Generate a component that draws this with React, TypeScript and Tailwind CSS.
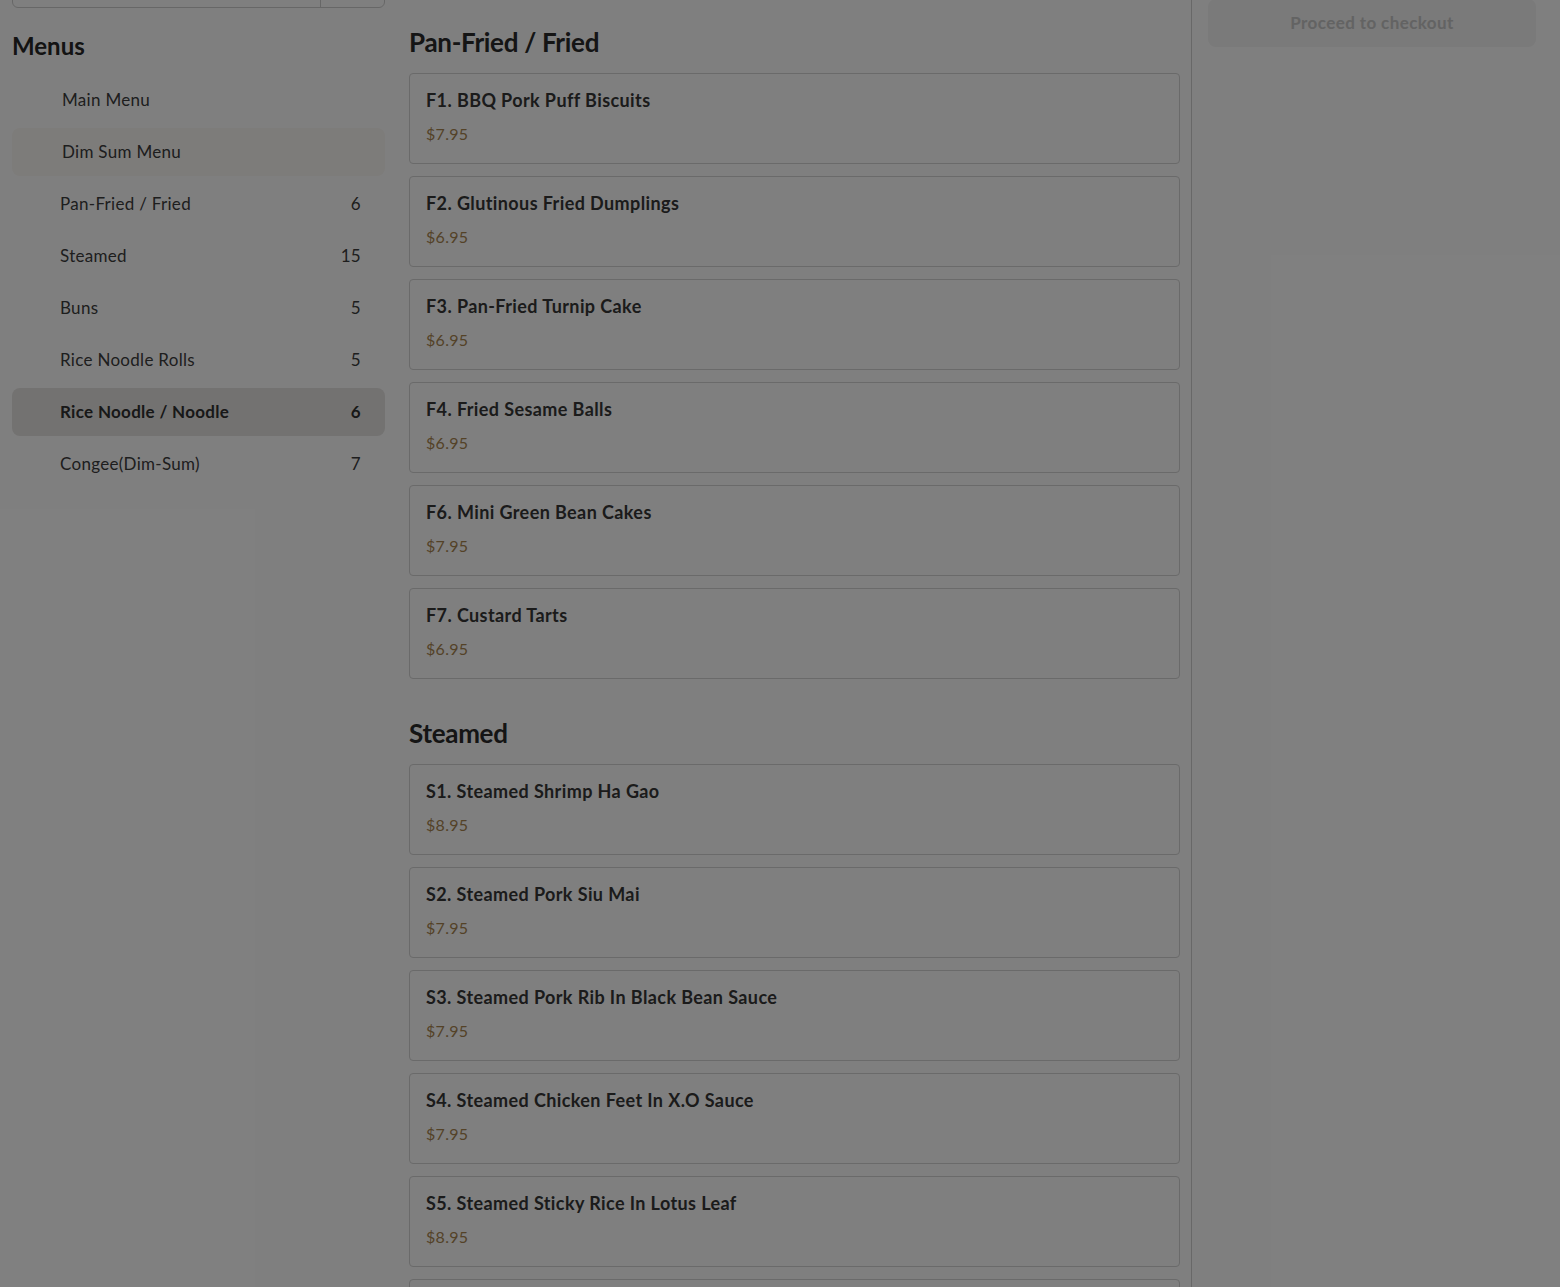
import React from "react";

const sections = [
  {
    title: "Pan-Fried / Fried",
    items: [
      ["F1. BBQ Pork Puff Biscuits", "$7.95"],
      ["F2. Glutinous Fried Dumplings", "$6.95"],
      ["F3. Pan-Fried Turnip Cake", "$6.95"],
      ["F4. Fried Sesame Balls", "$6.95"],
      ["F6. Mini Green Bean Cakes", "$7.95"],
      ["F7. Custard Tarts", "$6.95"],
    ],
  },
  {
    title: "Steamed",
    items: [
      ["S1. Steamed Shrimp Ha Gao", "$8.95"],
      ["S2. Steamed Pork Siu Mai", "$7.95"],
      ["S3. Steamed Pork Rib In Black Bean Sauce", "$7.95"],
      ["S4. Steamed Chicken Feet In X.O Sauce", "$7.95"],
      ["S5. Steamed Sticky Rice In Lotus Leaf", "$8.95"],
      ["S6. Steamed Beef Meatballs", "$7.95"],
    ],
  },
];

const cats: [string, number, boolean][] = [
  ["Pan-Fried / Fried", 6, false],
  ["Steamed", 15, false],
  ["Buns", 5, false],
  ["Rice Noodle Rolls", 5, false],
  ["Rice Noodle / Noodle", 6, true],
  ["Congee(Dim-Sum)", 7, false],
];

export default function App() {
  return (
    <div
      className="relative w-full h-[1287px] overflow-hidden bg-white text-[#3a3a3a]"
      style={{ fontFamily: '"Lato", "Noto Sans", sans-serif' }}
    >
      <div className="flex">
        {/* Sidebar */}
        <aside className="ml-3 w-[373px] shrink-0">
          <div className="mt-[-36px] flex h-11 rounded-md border border-[#cfcfcf]">
            <div className="w-[308px] border-r border-[#cfcfcf]" />
            <div className="flex-1" />
          </div>
          <h2 className="mt-[22px] text-[24px] leading-8 font-bold text-[#262626]">Menus</h2>
          <div className="mt-[14px] flex flex-col gap-1 tracking-[0.3px]">
            <div className="flex h-12 items-center rounded-lg pl-[50px] text-[17px] text-[#3c3c3c]">Main Menu</div>
            <div className="flex h-12 items-center rounded-lg bg-[#fbf8f4] pl-[50px] text-[17px] text-[#3c3c3c]">
              Dim Sum Menu
            </div>
            {cats.map(([name, n, active]) => (
              <div
                key={name}
                className={
                  "flex h-12 items-center justify-between rounded-lg pl-12 pr-6 text-[17px] " +
                  (active ? "bg-[#e6e5e3] font-bold text-[#303030]" : "text-[#3c3c3c]")
                }
              >
                <span>{name}</span>
                <span>{n}</span>
              </div>
            ))}
          </div>
        </aside>

        {/* Main */}
        <main className="ml-6 w-[771px] shrink-0 pt-6">
          {sections.map((s, si) => (
            <section key={s.title} className={si > 0 ? "mt-9" : ""}>
              <h2 className="mb-[13px] text-[26px] leading-9 font-bold tracking-[-0.3px] text-[#2a2a2a]">{s.title}</h2>
              <div className="flex flex-col gap-3">
                {s.items.map(([name, price]) => (
                  <div key={name} className="h-[91px] rounded border border-[#d4d4d4] px-4 pt-[14px]">
                    <div className="text-[18px] leading-6 font-bold tracking-[0.4px] text-[#363636]">{name}</div>
                    <div className="mt-[10px] text-[16px] leading-6 tracking-[0.3px] text-[#a8854f]">{price}</div>
                  </div>
                ))}
              </div>
            </section>
          ))}
        </main>

        {/* Right pane */}
        <div className="ml-[11px] h-[1287px] border-l border-[#d0d0d0] pl-4 pr-6 flex-1">
          <button className="mt-[-1px] h-12 w-full rounded-lg bg-[#f4f4f4] text-[17px] font-bold tracking-[0.4px] text-[#c6c6c6]">
            Proceed to checkout
          </button>
        </div>
      </div>

      {/* Modal backdrop */}
      <div className="absolute inset-0 bg-black/50" />
    </div>
  );
}
